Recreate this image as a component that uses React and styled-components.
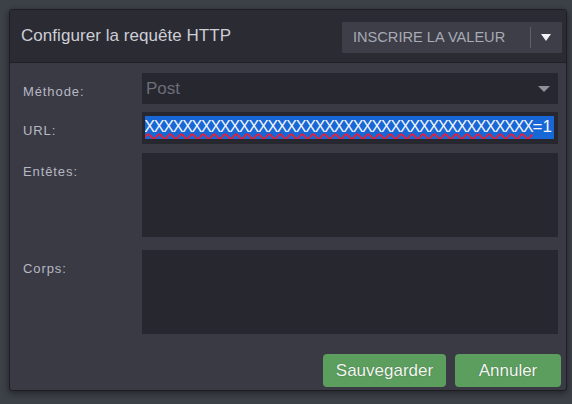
import React from 'react';
import styled, { createGlobalStyle } from 'styled-components';

const GlobalStyle = createGlobalStyle`
  html, body {
    margin: 0;
    padding: 0;
    background: #3c4047;
  }
  body {
    font-family: "Liberation Sans", Arial, sans-serif;
  }
`;

const Page = styled.div`
  width: 572px;
  height: 404px;
  padding: 9px 0 0 9px;
  box-sizing: border-box;
`;

const Dialog = styled.div`
  width: 558px;
  box-sizing: border-box;
  border: 1px solid #1d1d22;
  border-radius: 3px;
  background: #3a3a45;
  box-shadow: 0 2px 6px rgba(0, 0, 0, 0.45);
  overflow: hidden;
`;

const Header = styled.div`
  display: flex;
  align-items: center;
  justify-content: space-between;
  height: 52px;
  padding: 0 4px 0 11px;
  background: #2b2b33;
  border-bottom: 1px solid #1f1f25;
`;

const Title = styled.h1`
  margin: 0;
  font-size: 17px;
  font-weight: normal;
  color: #cdced6;
  letter-spacing: 0.05px;
`;

const ValueButton = styled.button`
  display: flex;
  align-items: center;
  width: 220px;
  height: 31px;
  margin-top: 2px;
  padding: 0 0 0 11px;
  border: none;
  border-radius: 1px;
  background: #3d3e48;
  color: #a8aab4;
  font-family: "Liberation Sans", Arial, sans-serif;
  font-size: 14.6px;
  cursor: pointer;
`;

const ButtonLabel = styled.span`
  flex: 1;
  text-align: left;
`;

const Separator = styled.span`
  width: 1px;
  height: 21px;
  background: #5d5f69;
  margin-right: 10px;
`;

const Caret = styled.svg`
  display: block;
  margin-right: ${({ $right }) => $right}px;
`;

const Body = styled.div`
  padding: 10px 5px 3px 13px;
`;

const Row = styled.div`
  display: grid;
  grid-template-columns: 119px 416px;
  margin-top: ${({ $spacing }) => $spacing}px;
`;

const Label = styled.label`
  padding-top: 11px;
  font-size: 13px;
  line-height: 16px;
  letter-spacing: 0.9px;
  color: #b6b8c2;
`;

const Field = styled.div`
  height: ${({ $height }) => $height}px;
  background: #27272f;
  box-sizing: border-box;
`;

const SelectField = styled(Field)`
  display: flex;
  align-items: center;
  justify-content: space-between;
  padding: 0 8px 0 4px;
`;

const Placeholder = styled.span`
  font-size: 17px;
  color: #6c6e79;
`;

const UrlField = styled(Field)`
  padding: 4px 4px 5px 3px;
`;

const UrlClip = styled.div`
  display: flex;
  justify-content: flex-end;
  overflow: hidden;
  height: 100%;
`;

const Selection = styled.span`
  flex-shrink: 0;
  white-space: nowrap;
  background: #1767d6;
  color: #f4f6fb;
  font-size: 16px;
  line-height: 22px;
`;

const Misspelled = styled.span`
  letter-spacing: -1.2px;
  text-decoration-line: underline;
  text-decoration-style: wavy;
  text-decoration-color: #e0203c;
  text-decoration-thickness: 1.5px;
  text-underline-offset: 1px;
`;

const Tail = styled.span`
  font-size: 17px;
  padding-right: 2px;
`;

const Footer = styled.div`
  display: flex;
  justify-content: flex-end;
  gap: 9px;
  margin-top: 20px;
`;

const ActionButton = styled.button`
  width: ${({ $width }) => $width}px;
  height: 33px;
  border: none;
  border-radius: 4px;
  background: #5b9e5e;
  color: #f3f6f1;
  font-family: "Liberation Sans", Arial, sans-serif;
  font-size: 17px;
  text-shadow: 0 0 1px rgba(30, 60, 30, 0.6);
  cursor: pointer;
`;

const Xs = 'X'.repeat(60);

export default function App() {
  return (
    <>
      <GlobalStyle />
      <Page>
        <Dialog>
          <Header>
            <Title>Configurer la requête HTTP</Title>
            <ValueButton>
              <ButtonLabel>INSCRIRE LA VALEUR</ButtonLabel>
              <Separator />
              <Caret $right={11} width="10" height="7" viewBox="0 0 10 7">
                <path d="M0 0 H10 L5 7 Z" fill="#f2f2f5" />
              </Caret>
            </ValueButton>
          </Header>
          <Body>
            <Row $spacing={0}>
              <Label>Méthode:</Label>
              <SelectField $height={31}>
                <Placeholder>Post</Placeholder>
                <Caret $right={0} width="12" height="6" viewBox="0 0 12 6">
                  <path d="M0 0 H12 L6 6 Z" fill="#8e909a" />
                </Caret>
              </SelectField>
            </Row>
            <Row $spacing={8}>
              <Label>URL:</Label>
              <UrlField $height={32}>
                <UrlClip>
                  <Selection>
                    <Misspelled>{Xs}</Misspelled>
                    <Tail>=1</Tail>
                  </Selection>
                </UrlClip>
              </UrlField>
            </Row>
            <Row $spacing={9}>
              <Label>Entêtes:</Label>
              <Field $height={84} />
            </Row>
            <Row $spacing={13}>
              <Label>Corps:</Label>
              <Field $height={84} />
            </Row>
            <Footer>
              <ActionButton $width={123}>Sauvegarder</ActionButton>
              <ActionButton $width={106}>Annuler</ActionButton>
            </Footer>
          </Body>
        </Dialog>
      </Page>
    </>
  );
}
